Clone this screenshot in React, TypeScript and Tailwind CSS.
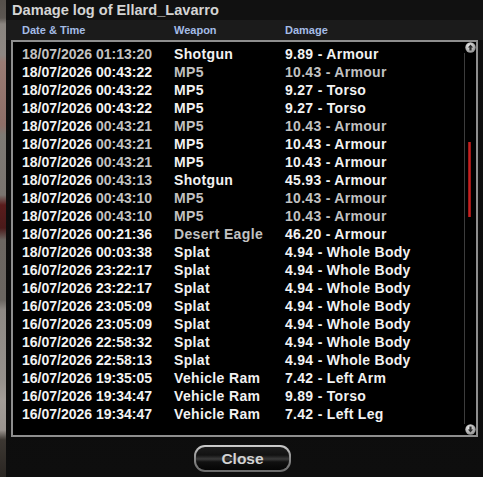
import React from "react";

type Cell = { t: string; dim?: boolean };
type Row = { date: Cell[]; weapon: Cell; damage: Cell };

const W = "#f2f2f2";
const G = "#c2c2c2";

const rows: Row[] = [
  { date: [{ t: "18/07/2026 01:13:20", dim: true }], weapon: { t: "Shotgun" }, damage: { t: "9.89 - Armour" } },
  { date: [{ t: "18/07/2026 00:43:22" }], weapon: { t: "MP5", dim: true }, damage: { t: "10.43 - Armour", dim: true } },
  { date: [{ t: "18/07/2026 00:43:22" }], weapon: { t: "MP5" }, damage: { t: "9.27 - Torso" } },
  { date: [{ t: "18/07/2026 00:43:22" }], weapon: { t: "MP5" }, damage: { t: "9.27 - Torso" } },
  { date: [{ t: "18/07/2026 " }, { t: "00:43:21", dim: true }], weapon: { t: "MP5", dim: true }, damage: { t: "10.43 - Armour", dim: true } },
  { date: [{ t: "18/07/2026 " }, { t: "00:43:21", dim: true }], weapon: { t: "MP5" }, damage: { t: "10.43 - Armour" } },
  { date: [{ t: "18/07/2026 " }, { t: "00:43:21", dim: true }], weapon: { t: "MP5" }, damage: { t: "10.43 - Armour" } },
  { date: [{ t: "18/07/2026 " }, { t: "00:43:13", dim: true }], weapon: { t: "Shotgun" }, damage: { t: "45.93 - Armour" } },
  { date: [{ t: "18/07/2026 " }, { t: "00:43:10", dim: true }], weapon: { t: "MP5", dim: true }, damage: { t: "10.43 - Armour", dim: true } },
  { date: [{ t: "18/07/2026 " }, { t: "00:43:10", dim: true }], weapon: { t: "MP5", dim: true }, damage: { t: "10.43 - Armour", dim: true } },
  { date: [{ t: "18/07/2026 00:21:36" }], weapon: { t: "Desert Eagle", dim: true }, damage: { t: "46.20 - Armour" } },
  { date: [{ t: "18/07/2026 00:03:38" }], weapon: { t: "Splat" }, damage: { t: "4.94 - Whole Body" } },
  { date: [{ t: "16/07/2026 23:22:17" }], weapon: { t: "Splat" }, damage: { t: "4.94 - Whole Body" } },
  { date: [{ t: "16/07/2026 23:22:17" }], weapon: { t: "Splat" }, damage: { t: "4.94 - Whole Body" } },
  { date: [{ t: "16/07/2026 23:05:09" }], weapon: { t: "Splat" }, damage: { t: "4.94 - Whole Body" } },
  { date: [{ t: "16/07/2026 23:05:09" }], weapon: { t: "Splat" }, damage: { t: "4.94 - Whole Body" } },
  { date: [{ t: "16/07/2026 22:58:32" }], weapon: { t: "Splat" }, damage: { t: "4.94 - Whole Body" } },
  { date: [{ t: "16/07/2026 22:58:13" }], weapon: { t: "Splat" }, damage: { t: "4.94 - Whole Body" } },
  { date: [{ t: "16/07/2026 19:35:05" }], weapon: { t: "Vehicle Ram" }, damage: { t: "7.42 - Left Arm" } },
  { date: [{ t: "16/07/2026 19:34:47" }], weapon: { t: "Vehicle Ram" }, damage: { t: "9.89 - Torso" } },
  { date: [{ t: "16/07/2026 19:34:47" }], weapon: { t: "Vehicle Ram" }, damage: { t: "7.42 - Left Leg" } },
];

function Text({ c }: { c: Cell }) {
  return <span style={{ color: c.dim ? G : W }}>{c.t}</span>;
}

function ArrowButton({ down }: { down?: boolean }) {
  return (
    <svg width="11" height="11" viewBox="0 0 11 11">
      <defs>
        <radialGradient id={down ? "sbd" : "sbu"} cx="40%" cy="35%" r="70%">
          <stop offset="0%" stopColor="#f0f0f0" />
          <stop offset="100%" stopColor="#8a8a8a" />
        </radialGradient>
      </defs>
      <circle cx="5.5" cy="5.5" r="5.2" fill={`url(#${down ? "sbd" : "sbu"})`} />
      {down ? (
        <path d="M4.4 2.6h2.2v2.8h1.6L5.5 8.4 2.8 5.4h1.6z" fill="#2a2a2a" />
      ) : (
        <path d="M4.4 8.4h2.2V5.6h1.6L5.5 2.6 2.8 5.6h1.6z" fill="#2a2a2a" />
      )}
    </svg>
  );
}

export default function App() {
  return (
    <div className="w-[483px] h-[477px] flex overflow-hidden bg-[#0b0b0b] font-['Liberation_Sans',Arial,sans-serif]">
      {/* game world peeking out on the left */}
      <div className="w-[6px] shrink-0 bg-[linear-gradient(180deg,#55504b_0px,#5c5752_18px,#8a8580_24px,#8e8782_55px,#9a7c74_62px,#8f6f68_125px,#7f7a75_135px,#7a746f_195px,#5a1c1c_205px,#4a1a1a_228px,#6c6661_240px,#6a6560_300px,#8f8a85_310px,#96918c_380px,#a39d98_400px,#9a948f_430px,#3c3732_440px,#2a2622_477px)]" />

      <div className="flex-1 flex flex-col bg-[linear-gradient(180deg,#101010,#0c0c0c_60%,#0e0e0e)]">
        {/* title bar */}
        <div className="h-[20px] shrink-0 bg-[#111111] pl-[6px] text-[14.6px] leading-[20px] font-bold text-[#d4d4d4] whitespace-nowrap">
          Damage log of Ellard_Lavarro
        </div>

        {/* column headers */}
        <div className="h-[20px] shrink-0 bg-[#1b1b1b] flex pl-[16px] text-[11px] leading-[20px] font-bold text-[#a4bce6]">
          <div className="w-[152px]">Date &amp; Time</div>
          <div className="w-[111px]">Weapon</div>
          <div>Damage</div>
        </div>

        {/* log list */}
        <div className="px-[5px]">
          <div className="relative h-[397px] border-2 border-[#8e8e8e] bg-black">
            <div className="pt-[3px] pl-[9px]">
              {rows.map((r, i) => (
                <div key={i} className="flex h-[18px] text-[14px] leading-[18px] font-bold whitespace-nowrap">
                  <div className="w-[152px]">
                    {r.date.map((c, j) => (
                      <Text key={j} c={c} />
                    ))}
                  </div>
                  <div className="w-[111px] tracking-[0.35px]">
                    <Text c={r.weapon} />
                  </div>
                  <div className="tracking-[0.3px]">
                    <Text c={r.damage} />
                  </div>
                </div>
              ))}
            </div>

            {/* scrollbar */}
            <div className="absolute right-0 top-0 bottom-0 w-[12px] flex flex-col items-center">
              <ArrowButton />
              <div className="relative flex-1 w-full">
                <div className="absolute left-0 top-0 bottom-0 w-px bg-[#3c3c3c]" />
                <div className="absolute left-[4px] top-[89px] h-[75px] w-[3px] bg-[linear-gradient(90deg,#8a1010,#c42222,#8a1010)]" />
              </div>
              <ArrowButton down />
            </div>
          </div>
        </div>

        {/* footer */}
        <div className="flex-1 flex justify-center pt-[8px] pr-[4px]">
          <button className="w-[97px] h-[27px] rounded-[11px] p-[2px] bg-[linear-gradient(180deg,#cfcfcf,#8a8a8a_50%,#6a6a6a)]">
            <div className="w-full h-full rounded-[9px] bg-[linear-gradient(180deg,#1e1e1e,#121212_35%,#3a3a3a_52%,#101010_65%,#050505)] flex items-center justify-center text-[15.5px] font-bold text-[#d2d2d2]">
              Close
            </div>
          </button>
        </div>
      </div>
    </div>
  );
}
